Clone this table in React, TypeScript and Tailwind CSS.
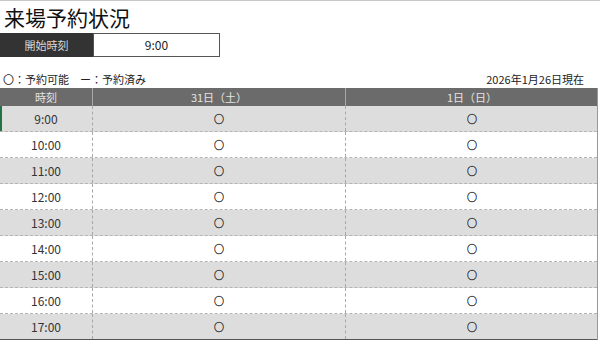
const font = { fontFamily: '"Noto Sans CJK JP", "Noto Sans", sans-serif' };

const times = ["9:00", "10:00", "11:00", "12:00", "13:00", "14:00", "15:00", "16:00", "17:00"];

export default function App() {
  return (
    <div
      className="w-[600px] h-[341px] bg-white text-[#222] overflow-hidden border-t border-[#c8c8c8]"
      style={font}
    >
      <h1 className="h-[32px] pl-[4px] text-[21px] leading-[32px] text-[#111]">来場予約状況</h1>

      <div className="flex h-[24px]">
        <div className="w-[93px] bg-[#333333] text-[#d8d8d8] text-[11px] flex items-center justify-center">
          開始時刻
        </div>
        <div className="w-[127px] border border-[#555] bg-white text-[12px] flex items-center justify-center">
          9:00
        </div>
      </div>

      <div className="w-[598px] h-[31px] flex items-end justify-between pl-[3px] pr-[14px] pb-[1px] text-[11px] leading-[16px]">
        <span>〇：予約可能　ー：予約済み</span>
        <span>2026年1月26日現在</span>
      </div>

      <div className="w-[598px] border-r border-[#999]">
        <div className="grid grid-cols-[93px_253px_252px] h-[18px] bg-[#6b6b6b] text-[#e4e4e4] text-[11px]">
          <div className="flex items-center justify-center border-r border-[#a8a8a8]">時刻</div>
          <div className="flex items-center justify-center border-r border-[#a8a8a8]">31日（土）</div>
          <div className="flex items-center justify-center">1日（日）</div>
        </div>

        {times.map((t, i) => (
          <div
            key={t}
            className={`grid grid-cols-[93px_253px_252px] h-[26px] text-[12px] text-[#333] ${
              i % 2 === 0 ? "bg-[#dddddd]" : "bg-white"
            } ${i === times.length - 1 ? "border-b border-[#555]" : "border-b border-dashed border-[#b4b4b4]"}`}
          >
            <div
              className={`flex items-center justify-center border-r border-dashed border-[#a8a8a8] ${
                i === 0 ? "shadow-[inset_2px_0_0_#217346]" : ""
              }`}
            >
              {t}
            </div>
            <div className="flex items-center justify-center border-r border-dashed border-[#a8a8a8] text-[10px] text-[#333] [-webkit-text-stroke:0.35px_#333]">
              ○
            </div>
            <div className="flex items-center justify-center text-[10px] text-[#333] [-webkit-text-stroke:0.35px_#333]">
              ○
            </div>
          </div>
        ))}
      </div>
    </div>
  );
}
